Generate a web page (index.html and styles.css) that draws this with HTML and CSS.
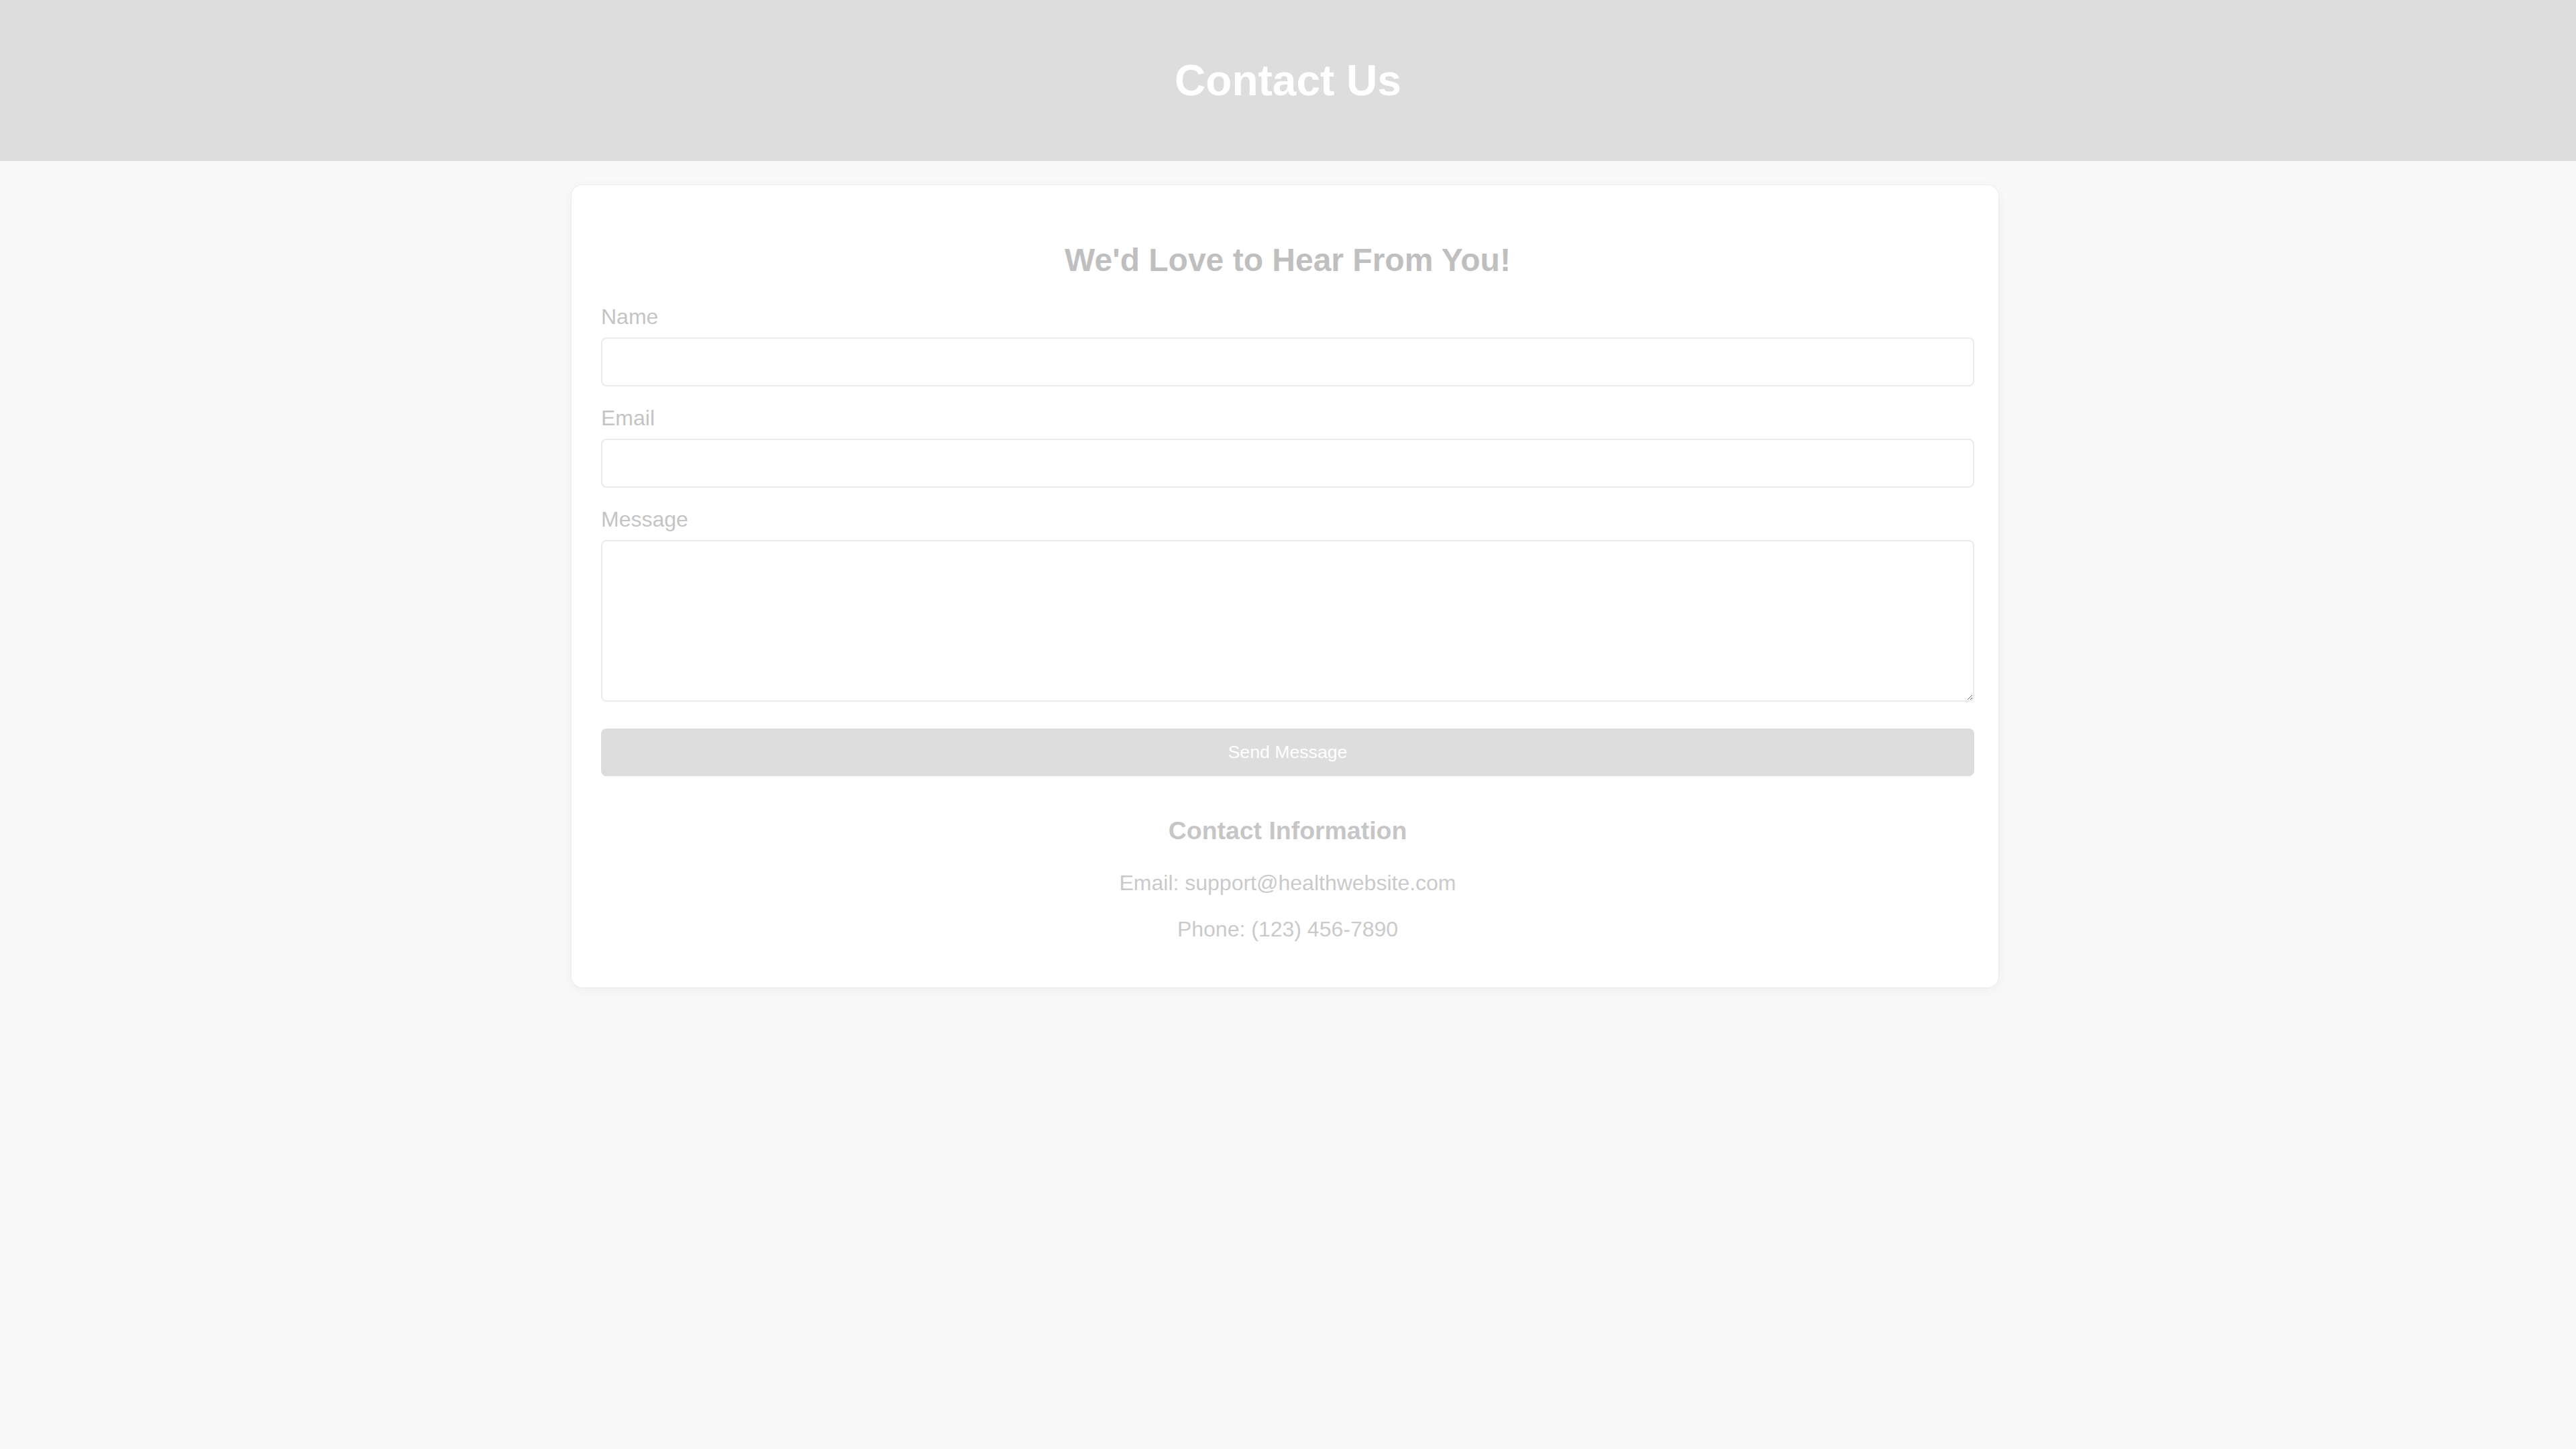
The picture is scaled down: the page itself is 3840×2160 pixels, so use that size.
FILE: index.html
```html
<!DOCTYPE html>
<html lang="en">
<head>
<meta charset="utf-8">
<title>Contact Us</title>
<link rel="stylesheet" href="styles.css">
</head>
<body>
<header class="site-header">
  <h1 class="site-title">Contact Us</h1>
</header>
<main class="page">
  <section class="card">
    <h2 class="card-title">We'd Love to Hear From You!</h2>
    <form class="contact-form">
      <div class="field">
        <label class="field-label" for="name">Name</label>
        <input class="field-input" type="text" id="name">
      </div>
      <div class="field">
        <label class="field-label" for="email">Email</label>
        <input class="field-input" type="email" id="email">
      </div>
      <div class="field">
        <label class="field-label" for="message">Message</label>
        <textarea class="field-input field-textarea" id="message"></textarea>
      </div>
      <button class="submit-btn" type="button">Send Message</button>
    </form>
    <div class="contact-info">
      <h3 class="info-title">Contact Information</h3>
      <p class="info-line">Email: support@healthwebsite.com</p>
      <p class="info-line">Phone: (123) 456-7890</p>
    </div>
  </section>
</main>
</body>
</html>
```
FILE: styles.css
```css
html, body {
  margin: 0;
  padding: 0;
}

body {
  background: #f9f9f9;
  font-family: "Liberation Sans", Arial, sans-serif;
  min-height: 2160px;
}

.site-header {
  background: #dddddd;
  padding: 40px 0;
  text-align: center;
}

.site-title {
  margin: 42.88px 0;
  font-size: 64px;
  font-weight: bold;
  color: #ffffff;
  line-height: normal;
}

.page {
  padding-top: 36px;
}

.card {
  box-sizing: border-box;
  width: 2127px;
  margin-left: calc(50% - 1068px);
  padding: 44px 36px 36px 44px;
  background: #ffffff;
  border-radius: 16px;
  box-shadow: 0 0 0 1px rgba(0, 0, 0, 0.035), 0 4px 20px rgba(0, 0, 0, 0.05);
}

.card-title {
  margin: 39.84px 0;
  font-size: 48px;
  font-weight: bold;
  color: #bfbfbf;
  text-align: center;
  line-height: normal;
}

.contact-form {
  display: flex;
  flex-direction: column;
}

.field {
  display: flex;
  flex-direction: column;
  margin-bottom: 29px;
}

.field:last-of-type {
  margin-bottom: 0;
}

.field-label {
  display: block;
  font-size: 32px;
  color: #c4c4c4;
  margin-bottom: 12px;
  line-height: normal;
}

.field-input {
  display: block;
  box-sizing: border-box;
  width: 100%;
  height: 73px;
  padding: 20px;
  border: 2px solid #ebebeb;
  border-radius: 8px;
  background: #ffffff;
  font-family: "Liberation Sans", Arial, sans-serif;
  font-size: 26.67px;
  margin: 0;
}

.field-textarea {
  height: 241px;
  resize: vertical;
}

.submit-btn {
  display: block;
  width: 100%;
  height: 71px;
  margin-top: 40px;
  padding: 20px;
  border: none;
  border-radius: 8px;
  background: #dddddd;
  color: #ffffff;
  font-family: "Liberation Sans", Arial, sans-serif;
  font-size: 26.67px;
  line-height: normal;
}

.contact-info {
  text-align: center;
}

.info-title {
  margin: 60px 0 37.44px;
  font-size: 37.44px;
  font-weight: bold;
  color: #c6c6c6;
  line-height: normal;
}

.info-line {
  margin: 32px 0;
  font-size: 32px;
  color: #cacaca;
  line-height: normal;
}
```
